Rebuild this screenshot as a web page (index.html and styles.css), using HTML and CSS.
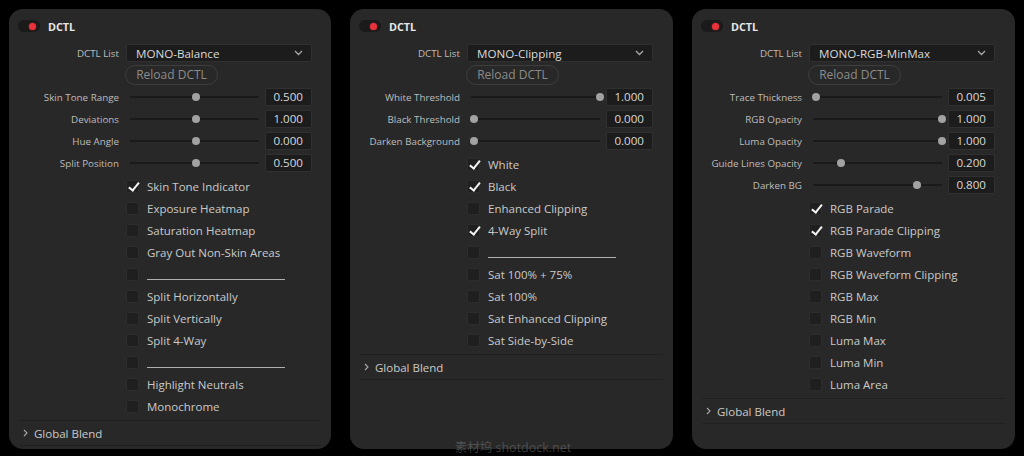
FILE: index.html
```html
<!DOCTYPE html>
<html>
<head>
<meta charset="utf-8">
<link rel="stylesheet" href="styles.css">
</head>
<body>
<div class="panel">
  <div class="head"><span class="toggle"><span class="dot"></span></span><span class="title">DCTL</span></div>
  <div class="drow"><span class="lbl">DCTL List</span><div class="select"><span>MONO-Balance</span><svg class="chev" width="9" height="6" viewBox="0 0 9 6"><path d="M1 1 L4.5 4.5 L8 1" fill="none" stroke="#a8a8a8" stroke-width="1.3"/></svg></div></div>
  <div class="reload">Reload DCTL</div>
  <div class="sliders">
    <div class="srow"><span class="lbl">Skin Tone Range</span><div class="track"><span class="thumb" style="--v:0.5"></span></div><div class="val">0.500</div></div>
    <div class="srow"><span class="lbl">Deviations</span><div class="track"><span class="thumb" style="--v:0.5"></span></div><div class="val">1.000</div></div>
    <div class="srow"><span class="lbl">Hue Angle</span><div class="track"><span class="thumb" style="--v:0.5"></span></div><div class="val">0.000</div></div>
    <div class="srow"><span class="lbl">Split Position</span><div class="track"><span class="thumb" style="--v:0.5"></span></div><div class="val">0.500</div></div>
  </div>
  <div class="checks">
    <div class="crow"><span class="box on"></span><span class="clbl">Skin Tone Indicator</span></div>
    <div class="crow"><span class="box"></span><span class="clbl">Exposure Heatmap</span></div>
    <div class="crow"><span class="box"></span><span class="clbl">Saturation Heatmap</span></div>
    <div class="crow"><span class="box"></span><span class="clbl">Gray Out Non-Skin Areas</span></div>
    <div class="crow"><span class="box"></span><span class="blank"></span></div>
    <div class="crow"><span class="box"></span><span class="clbl">Split Horizontally</span></div>
    <div class="crow"><span class="box"></span><span class="clbl">Split Vertically</span></div>
    <div class="crow"><span class="box"></span><span class="clbl">Split 4-Way</span></div>
    <div class="crow"><span class="box"></span><span class="blank"></span></div>
    <div class="crow"><span class="box"></span><span class="clbl">Highlight Neutrals</span></div>
    <div class="crow"><span class="box"></span><span class="clbl">Monochrome</span></div>
  </div>
  <div class="blend"><svg class="arrow" width="5" height="8" viewBox="0 0 5 8"><path d="M1 1 L4 4 L1 7" fill="none" stroke="#a8a8a8" stroke-width="1.1"/></svg>Global Blend</div>
</div>

<div class="panel">
  <div class="head"><span class="toggle"><span class="dot"></span></span><span class="title">DCTL</span></div>
  <div class="drow"><span class="lbl">DCTL List</span><div class="select"><span>MONO-Clipping</span><svg class="chev" width="9" height="6" viewBox="0 0 9 6"><path d="M1 1 L4.5 4.5 L8 1" fill="none" stroke="#a8a8a8" stroke-width="1.3"/></svg></div></div>
  <div class="reload">Reload DCTL</div>
  <div class="sliders">
    <div class="srow"><span class="lbl">White Threshold</span><div class="track"><span class="thumb" style="--v:1"></span></div><div class="val">1.000</div></div>
    <div class="srow"><span class="lbl">Black Threshold</span><div class="track"><span class="thumb" style="--v:0"></span></div><div class="val">0.000</div></div>
    <div class="srow"><span class="lbl">Darken Background</span><div class="track"><span class="thumb" style="--v:0"></span></div><div class="val">0.000</div></div>
  </div>
  <div class="checks">
    <div class="crow"><span class="box on"></span><span class="clbl">White</span></div>
    <div class="crow"><span class="box on"></span><span class="clbl">Black</span></div>
    <div class="crow"><span class="box"></span><span class="clbl">Enhanced Clipping</span></div>
    <div class="crow"><span class="box on"></span><span class="clbl">4-Way Split</span></div>
    <div class="crow"><span class="box"></span><span class="blank short"></span></div>
    <div class="crow"><span class="box"></span><span class="clbl">Sat 100% + 75%</span></div>
    <div class="crow"><span class="box"></span><span class="clbl">Sat 100%</span></div>
    <div class="crow"><span class="box"></span><span class="clbl">Sat Enhanced Clipping</span></div>
    <div class="crow"><span class="box"></span><span class="clbl">Sat Side-by-Side</span></div>
  </div>
  <div class="blend"><svg class="arrow" width="5" height="8" viewBox="0 0 5 8"><path d="M1 1 L4 4 L1 7" fill="none" stroke="#a8a8a8" stroke-width="1.1"/></svg>Global Blend</div>
</div>

<div class="panel">
  <div class="head"><span class="toggle"><span class="dot"></span></span><span class="title">DCTL</span></div>
  <div class="drow"><span class="lbl">DCTL List</span><div class="select"><span>MONO-RGB-MinMax</span><svg class="chev" width="9" height="6" viewBox="0 0 9 6"><path d="M1 1 L4.5 4.5 L8 1" fill="none" stroke="#a8a8a8" stroke-width="1.3"/></svg></div></div>
  <div class="reload">Reload DCTL</div>
  <div class="sliders">
    <div class="srow"><span class="lbl">Trace Thickness</span><div class="track"><span class="thumb" style="--v:0"></span></div><div class="val">0.005</div></div>
    <div class="srow"><span class="lbl">RGB Opacity</span><div class="track"><span class="thumb" style="--v:1"></span></div><div class="val">1.000</div></div>
    <div class="srow"><span class="lbl">Luma Opacity</span><div class="track"><span class="thumb" style="--v:1"></span></div><div class="val">1.000</div></div>
    <div class="srow"><span class="lbl">Guide Lines Opacity</span><div class="track"><span class="thumb" style="--v:0.2"></span></div><div class="val">0.200</div></div>
    <div class="srow"><span class="lbl">Darken BG</span><div class="track"><span class="thumb" style="--v:0.8"></span></div><div class="val">0.800</div></div>
  </div>
  <div class="checks">
    <div class="crow"><span class="box on"></span><span class="clbl">RGB Parade</span></div>
    <div class="crow"><span class="box on"></span><span class="clbl">RGB Parade Clipping</span></div>
    <div class="crow"><span class="box"></span><span class="clbl">RGB Waveform</span></div>
    <div class="crow"><span class="box"></span><span class="clbl">RGB Waveform Clipping</span></div>
    <div class="crow"><span class="box"></span><span class="clbl">RGB Max</span></div>
    <div class="crow"><span class="box"></span><span class="clbl">RGB Min</span></div>
    <div class="crow"><span class="box"></span><span class="clbl">Luma Max</span></div>
    <div class="crow"><span class="box"></span><span class="clbl">Luma Min</span></div>
    <div class="crow"><span class="box"></span><span class="clbl">Luma Area</span></div>
  </div>
  <div class="blend"><svg class="arrow" width="5" height="8" viewBox="0 0 5 8"><path d="M1 1 L4 4 L1 7" fill="none" stroke="#a8a8a8" stroke-width="1.1"/></svg>Global Blend</div>
</div>

<div class="watermark">素材坞 shotdock.net</div>
</body>
</html>
```

FILE: styles.css
```css
html, body {
  margin: 0;
  padding: 0;
}
body {
  width: 1024px;
  height: 456px;
  box-sizing: border-box;
  background: #000;
  padding: 9px 9px 7px 9px;
  display: flex;
  gap: 19px;
  font-family: "Open Sans", "Noto Sans CJK SC", sans-serif;
  position: relative;
  overflow: hidden;
}
.panel {
  width: 322px;
  flex: none;
  background: #282828;
  border-radius: 14px;
  display: flex;
  flex-direction: column;
}
.panel + .panel { width: 323px; }

.head {
  display: flex;
  align-items: center;
  height: 14px;
  margin-top: 10px;
  padding-left: 9px;
}
.toggle {
  width: 22px;
  height: 12px;
  border-radius: 6px;
  background: #1a1a1a;
  display: flex;
  align-items: center;
  justify-content: flex-end;
  padding-right: 4px;
  box-sizing: border-box;
}
.dot {
  width: 7px;
  height: 7px;
  border-radius: 50%;
  background: #e8333d;
  box-shadow: 0 0 2px rgba(255, 60, 60, 0.6);
}
.title {
  margin-left: 8px;
  font-weight: 700;
  font-size: 10.8px;
  color: #e6e6e6;
}

.lbl {
  width: 110px;
  flex: none;
  text-align: right;
  font-size: 9.8px;
  color: #bdbdbd;
  white-space: nowrap;
}
.drow {
  display: flex;
  align-items: center;
  margin-top: 11px;
  height: 18px;
}
.select {
  margin-left: 7px;
  width: 186px;
  height: 18px;
  box-sizing: border-box;
  background: #1c1c1c;
  border: 1px solid #303030;
  border-radius: 2px;
  display: flex;
  align-items: center;
  justify-content: space-between;
  padding: 0 8px 0 9px;
  font-size: 11.6px;
  color: #dadada;
}
.chev { display: block; }

.reload {
  margin-top: 3px;
  margin-left: 116px;
  width: 93px;
  height: 20px;
  box-sizing: border-box;
  border: 1px solid #3e3e3e;
  border-radius: 10px;
  text-align: center;
  font-size: 12px;
  line-height: 18px;
  color: #8c8c8c;
}

.sliders {
  margin-top: 1px;
  display: flex;
  flex-direction: column;
}
.srow {
  display: flex;
  align-items: center;
  height: 22px;
}
.track {
  margin-left: 11px;
  width: 129px;
  height: 2px;
  background: #1a1a1a;
  position: relative;
}
.thumb {
  position: absolute;
  top: -3px;
  left: calc(3px + var(--v) * 126px - 4px);
  width: 8px;
  height: 8px;
  border-radius: 50%;
  background: #a2a2a2;
}
.val {
  margin-left: 6px;
  width: 47px;
  height: 18px;
  box-sizing: border-box;
  background: #1c1c1c;
  border: 1px solid #303030;
  border-radius: 1px;
  text-align: right;
  padding-right: 8px;
  font-size: 11.6px;
  line-height: 16px;
  color: #d8d8d8;
}

.checks {
  margin-top: 1px;
  display: flex;
  flex-direction: column;
}
.crow {
  display: flex;
  align-items: center;
  height: 22px;
  padding-left: 117px;
}
.box {
  width: 13px;
  height: 13px;
  box-sizing: border-box;
  background: #1f1f1f;
  border: 1px solid #2d2d2d;
  border-radius: 2px;
  flex: none;
  position: relative;
}
.box.on::after {
  content: "";
  position: absolute;
  left: 3.5px;
  top: -1px;
  width: 3.5px;
  height: 9px;
  border-right: 2.2px solid #f4f4f4;
  border-bottom: 2.2px solid #f4f4f4;
  transform: rotate(38deg);
}
.clbl {
  margin-left: 8px;
  font-size: 11.5px;
  color: #cacaca;
  white-space: nowrap;
}
.blank {
  margin-left: 8px;
  width: 138px;
  height: 1px;
  background: #b0b0b0;
  margin-top: 10px;
}
.blank.short { width: 128px; }

.blend {
  margin: 3px 10px 0 10px;
  border-top: 1px solid #202020;
  border-bottom: 1px solid #202020;
  height: 24px;
  display: flex;
  align-items: center;
  padding-left: 4px;
  font-size: 11.5px;
  color: #cacaca;
}
.arrow {
  display: block;
  margin-right: 6px;
}

.watermark {
  position: absolute;
  left: 0;
  right: 0;
  top: 437px;
  text-align: center;
  font-size: 12.5px;
  color: rgba(120, 120, 120, 0.5);
  padding-left: 2px;
}
```
